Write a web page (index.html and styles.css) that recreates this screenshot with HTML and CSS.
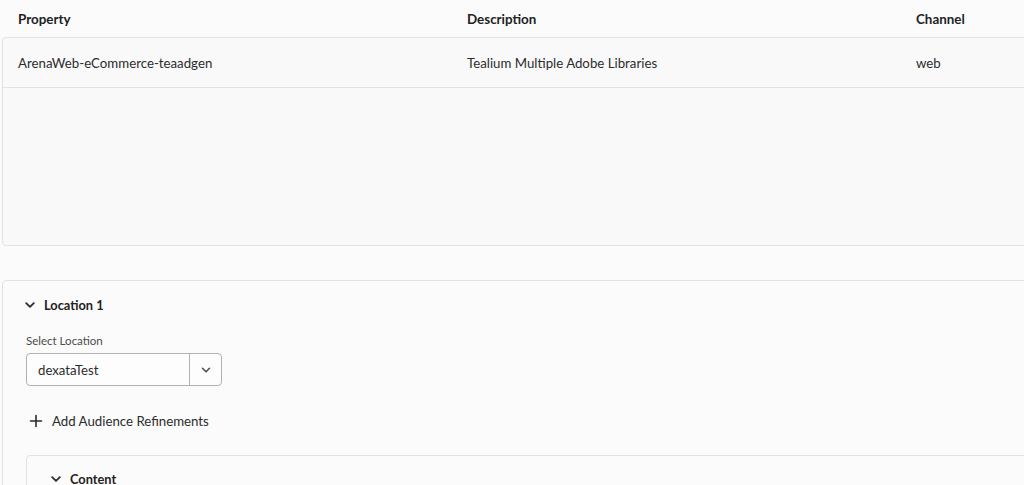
FILE: index.html
```html
<!DOCTYPE html>
<html lang="en">
<head>
<meta charset="utf-8">
<title>Activity</title>
<link rel="stylesheet" href="styles.css">
</head>
<body>
<div class="page">
  <div class="table">
    <div class="row head">
      <div class="cell">Property</div>
      <div class="cell">Description</div>
      <div class="cell">Channel</div>
    </div>
    <div class="tbody">
      <div class="row body-row">
        <div class="cell">ArenaWeb-eCommerce-teaadgen</div>
        <div class="cell">Tealium Multiple Adobe Libraries</div>
        <div class="cell">web</div>
      </div>
    </div>
  </div>

  <div class="panel">
    <div class="acc-head">
      <svg class="chev" width="10" height="10" viewBox="0 0 10 10"><path d="M1.2 3.2 L5 6.8 L8.8 3.2" fill="none" stroke="#2c2c2c" stroke-width="1.8" stroke-linecap="round" stroke-linejoin="round"/></svg>
      <span>Location 1</span>
    </div>
    <div class="field-label">Select Location</div>
    <div class="picker">
      <span class="picker-value">dexataTest</span>
      <span class="picker-btn">
        <svg width="10" height="10" viewBox="0 0 10 10"><path d="M1.5 3.2 L5 6.7 L8.5 3.2" fill="none" stroke="#4b4b4b" stroke-width="1.5" stroke-linecap="round" stroke-linejoin="round"/></svg>
      </span>
    </div>
    <div class="add">
      <svg width="14" height="14" viewBox="0 0 14 14"><path d="M7 1.5 V12.5 M1.5 7 H12.5" stroke="#2c2c2c" stroke-width="1.6" stroke-linecap="round"/></svg>
      <span>Add Audience Refinements</span>
    </div>
    <div class="subpanel">
      <div class="acc-head sub-head">
        <svg class="chev" width="10" height="10" viewBox="0 0 10 10"><path d="M1.2 3.2 L5 6.8 L8.8 3.2" fill="none" stroke="#2c2c2c" stroke-width="1.8" stroke-linecap="round" stroke-linejoin="round"/></svg>
        <span>Content</span>
      </div>
    </div>
  </div>
</div>
</body>
</html>
```

FILE: styles.css
```css
html, body {
  margin: 0;
  padding: 0;
  background: #fbfbfb;
  overflow: hidden;
}
body {
  font-family: Lato, "Open Sans", sans-serif;
  color: #2c2c2c;
  width: 1024px;
  height: 485px;
}
.page {
  padding-left: 2px;
}
.table {
  width: 1400px;
}
.row {
  display: grid;
  grid-template-columns: 449px 449px 449px;
  padding-left: 15px;
}
.head {
  height: 37px;
  align-items: center;
  font-size: 13.4px;
  font-weight: 700;
  color: #222;
  padding-left: 16px;
}
.tbody {
  height: 207px;
  border: 1px solid #e2e2e2;
  border-radius: 4px;
  background: #f9f9f9;
}
.body-row {
  height: 49px;
  align-items: center;
  border-bottom: 1px solid #e2e2e2;
  font-size: 13.25px;
}
.panel {
  margin-top: 34px;
  width: 1400px;
  border: 1px solid #e2e2e2;
  border-radius: 4px;
  padding: 0 23px;
  height: 300px;
  background: #fbfbfb;
}
.acc-head {
  display: flex;
  align-items: center;
  gap: 9px;
  height: 22px;
  padding-top: 13px;
  font-size: 12.8px;
  font-weight: 700;
  color: #222;
}
.sub-head {
  padding-top: 12px;
}
.chev {
  flex: none;
  margin-left: -1px;
}
.field-label {
  margin-top: 17px;
  font-size: 11.5px;
  line-height: 16px;
  color: #4b4b4b;
}
.picker {
  margin-top: 4px;
  width: 194px;
  height: 31px;
  border: 1px solid #b1b1b1;
  border-radius: 4px;
  display: flex;
  align-items: stretch;
  background: #fdfdfd;
}
.picker-value {
  flex: 1;
  display: flex;
  align-items: center;
  padding-left: 11px;
  font-size: 13.2px;
  color: #2c2c2c;
}
.picker-btn {
  width: 31px;
  border-left: 1px solid #b1b1b1;
  display: flex;
  align-items: center;
  justify-content: center;
}
.add {
  margin-top: 19px;
  height: 32px;
  display: flex;
  align-items: center;
  gap: 9px;
  padding-left: 3px;
  font-size: 13.25px;
  color: #2c2c2c;
}
.subpanel {
  margin-top: 18px;
  border: 1px solid #e2e2e2;
  border-radius: 4px;
  padding: 0 23px 0 25px;
  height: 100px;
}
```
